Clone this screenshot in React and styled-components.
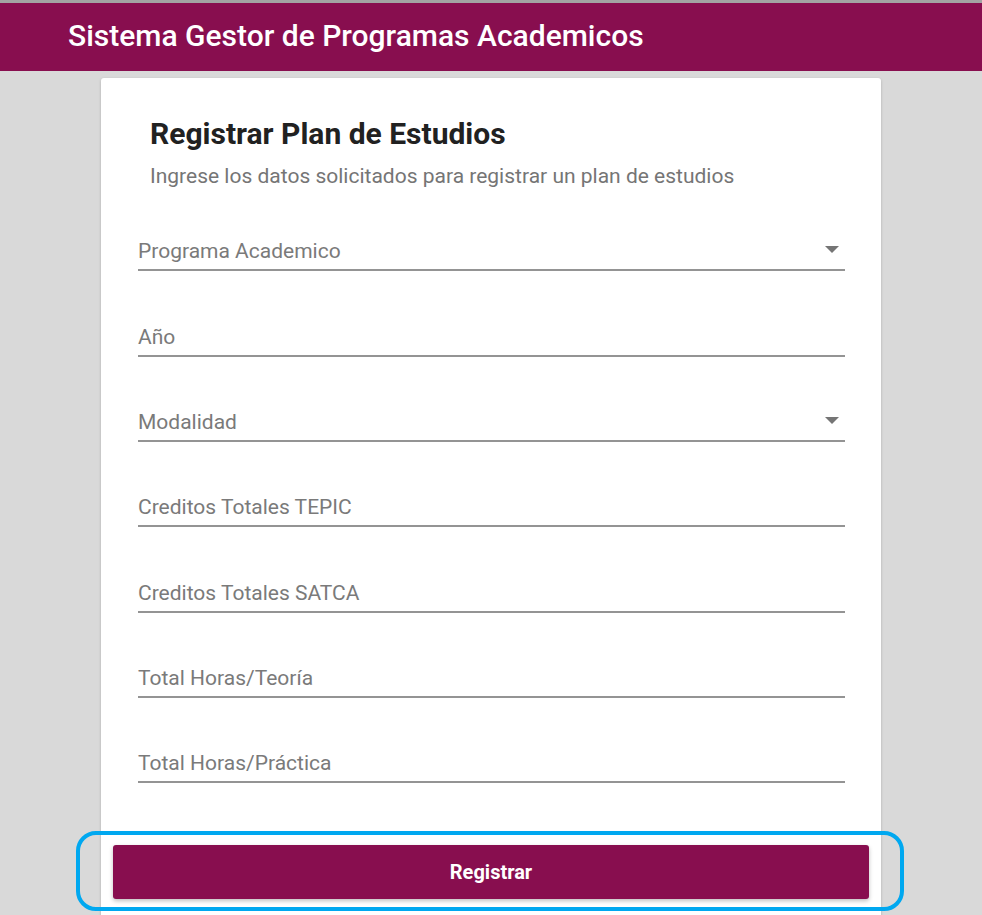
import React from 'react'
import styled, { createGlobalStyle } from 'styled-components'

const GlobalStyle = createGlobalStyle`
    html, body {
        margin: 0;
        padding: 0;
        background: #d9d9d9;
        font-family: Roboto, 'Noto Sans', sans-serif;
        overflow: hidden;
    }
`;

const Page = styled.div`
    min-height: 915px;
    border-top: 3px solid #a3a3a3;
    box-sizing: border-box;
`;

const Header = styled.header`
    height: 68px;
    background: #880e4f;
    display: flex;
    align-items: center;
    padding: 0 0 3px 68px;
    box-sizing: border-box;

    h1 {
        margin: 0;
        color: #fff;
        font-size: 30px;
        font-weight: 500;
    }
`;

const Card = styled.div`
    width: 780px;
    margin: 7px auto 0;
    background: #fff;
    border-radius: 3px;
    box-shadow: 0 1px 3px rgba(0, 0, 0, 0.2);
    padding: 38px 12px 60px;
    box-sizing: border-box;
`;

const Intro = styled.div`
    padding: 0 37px;

    h2 {
        margin: 0;
        font-size: 30px;
        line-height: 36px;
        font-weight: 700;
        color: #212121;
    }

    p {
        margin: 12px 0 0;
        font-size: 21px;
        line-height: 24px;
        color: #757575;
    }
`;

const Fields = styled.div`
    display: flex;
    flex-direction: column;
    padding: 0 24px 0 25px;
    margin-top: -2px;
`;

const Field = styled.div`
    height: 85.33px;
    display: flex;
    align-items: flex-end;
    justify-content: space-between;
    border-bottom: 2px solid #949494;
    box-sizing: border-box;
    padding-bottom: 6px;

    span {
        font-size: 21px;
        line-height: 24px;
        color: #7a7a7a;
    }
`;

const Arrow = styled.i`
    width: 0;
    height: 0;
    border-left: 7px solid transparent;
    border-right: 7px solid transparent;
    border-top: 7px solid #757575;
    margin: 0 6px 10px 0;
`;

const ButtonArea = styled.div`
    position: relative;
    margin-top: 62px;
`;

const Button = styled.button`
    display: block;
    width: 100%;
    height: 54px;
    border: none;
    border-radius: 3px;
    background: #880e4f;
    color: #fff;
    font-family: Roboto, 'Noto Sans', sans-serif;
    font-size: 20px;
    font-weight: 700;
    box-shadow: 0 2px 4px rgba(0, 0, 0, 0.25);
`;

const Highlight = styled.div`
    position: absolute;
    top: -14px;
    bottom: -12px;
    left: -37px;
    right: -35px;
    border: 4px solid #00a8f0;
    border-radius: 20px;
    pointer-events: none;
`;

const fields = [
    { label: 'Programa Academico', select: true },
    { label: 'Año' },
    { label: 'Modalidad', select: true },
    { label: 'Creditos Totales TEPIC' },
    { label: 'Creditos Totales SATCA' },
    { label: 'Total Horas/Teoría' },
    { label: 'Total Horas/Práctica' },
];

export default function App() {
    return (
        <Page>
            <GlobalStyle />
            <Header>
                <h1>Sistema Gestor de Programas Academicos</h1>
            </Header>
            <Card>
                <Intro>
                    <h2>Registrar Plan de Estudios</h2>
                    <p>Ingrese los datos solicitados para registrar un plan de estudios</p>
                </Intro>
                <Fields>
                    {fields.map(f => (
                        <Field key={f.label}>
                            <span>{f.label}</span>
                            {f.select && <Arrow />}
                        </Field>
                    ))}
                </Fields>
                <ButtonArea>
                    <Button>Registrar</Button>
                    <Highlight />
                </ButtonArea>
            </Card>
        </Page>
    )
}
